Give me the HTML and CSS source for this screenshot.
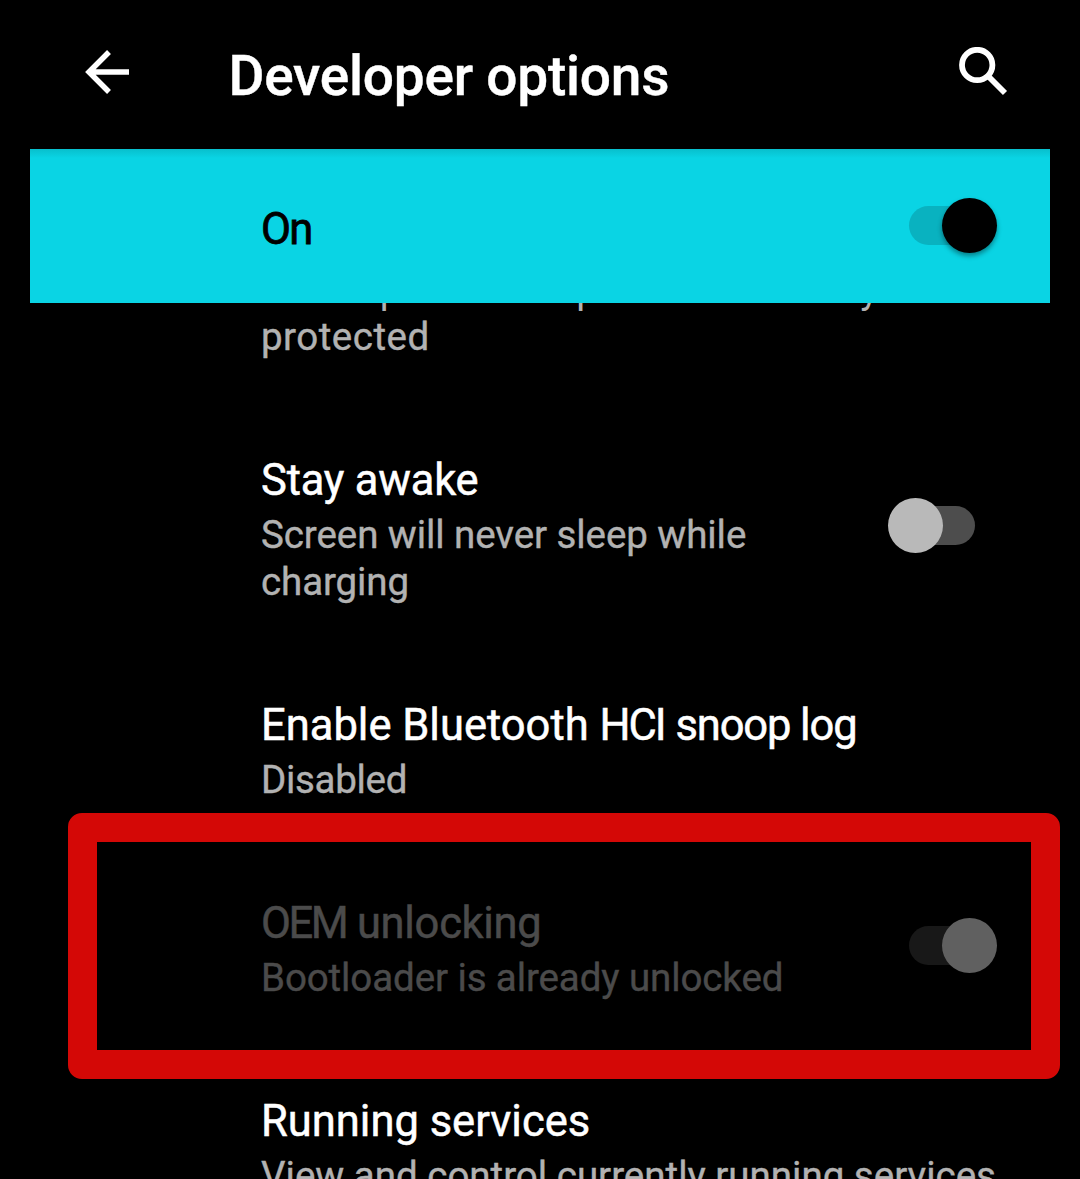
FILE: index.html
```html
<!DOCTYPE html>
<html lang="en">
<head>
<meta charset="utf-8">
<title>Developer options</title>
<link rel="stylesheet" href="styles.css">
</head>
<body>
<div class="screen">
  <header class="app-bar">
    <svg class="back" viewBox="0 0 46 46" fill="none" stroke="#fff" stroke-width="5.5"><path d="M45 23H6M25 3L5 23l20 20"/></svg>
    <h1 class="app-title"><span class="t-title">Developer options</span></h1>
    <svg class="search" viewBox="0 0 50 50" fill="none" stroke="#fff" stroke-width="5.800"><circle cx="18.200" cy="18" r="15.200"/><path d="M28.500 28.500L46 46"/></svg>
  </header>
  <div class="master">
    <span class="master-label t-on">On</span>
    <span class="switch on accent"><i class="track"></i><i class="thumb"></i></span>
  </div>
  <main class="list">
    <section class="row first">
      <div class="text">
        <p class="summary"><span class="t-backup">Desktop full backups aren’t currently</span><br><span class="t-protected">protected</span></p>
      </div>
    </section>
    <section class="row">
      <div class="text">
        <h2 class="name"><span class="t-stay">Stay awake</span></h2>
        <p class="summary"><span class="t-screen">Screen will never sleep while</span><br><span class="t-charging">charging</span></p>
      </div>
      <span class="switch off"><i class="track"></i><i class="thumb"></i></span>
    </section>
    <section class="row">
      <div class="text">
        <h2 class="name">Enable Bluetooth <span class="t-hci">HCI</span> <span class="t-snoop">snoop log</span></h2>
        <p class="summary"><span class="t-disabled">Disabled</span></p>
      </div>
    </section>
    <section class="row disabled">
      <div class="text">
        <h2 class="name"><span class="t-oem">OEM</span> <span class="t-unlocking">unlocking</span></h2>
        <p class="summary"><span class="t-boot">Bootloader is already unlocked</span></p>
      </div>
      <span class="switch on"><i class="track"></i><i class="thumb"></i></span>
      <div class="highlight"></div>
    </section>
    <section class="row">
      <div class="text">
        <h2 class="name"><span class="t-running">Running services</span></h2>
        <p class="summary"><span class="t-view">View and control currently running services</span></p>
      </div>
    </section>
  </main>
</div>
</body>
</html>
```
FILE: styles.css
```css
* { box-sizing: border-box; }
body { margin: 0; background: #000; color: #fff; font-family: Roboto, "Liberation Sans", sans-serif; }
h1, h2, p { margin: 0; font-weight: 400; white-space: nowrap; }
.screen { display: flex; flex-direction: column; height: 1179px; overflow: hidden; background: #000; }

.app-bar { flex: none; display: flex; height: 149px; padding: 0 71px 0 84px; }
.back { width: 46px; height: 46px; margin-top: 49px; }
.app-title { flex: 1; margin-left: 98.500px; margin-top: 44px; font-size: 55px; line-height: 64px; font-weight: 500; letter-spacing: -.23px; -webkit-text-stroke: .4px; }
.search { width: 50px; height: 50px; margin-top: 47px; }

.master { flex: none; position: relative; z-index: 1; display: flex; align-items: center; justify-content: space-between; height: 154px; margin: 0 30px; padding: 0 53px 0 231px; background: linear-gradient(#08bfcc, #0ad4e4 9px); color: #000; }
.master-label { font-size: 43.500px; line-height: 52px; font-weight: 400; padding-top: 8px; letter-spacing: -1.8px; -webkit-text-stroke: .8px; }

.list { flex: none; margin-top: -37px; }
.row { position: relative; display: flex; align-items: flex-start; justify-content: space-between; padding: 48px 83px 46px 261px; }
.row.first { padding-top: 0; }
.name { font-size: 43.500px; line-height: 53px; -webkit-text-stroke: .5px; }
.summary { font-size: 38.500px; line-height: 47px; color: #b2b2b2; -webkit-text-stroke: .4px; }
.name + .summary { margin-top: 4px; }
.disabled .name, .disabled .summary { color: #4b4b4b; }
.t-backup { letter-spacing: -.08px; -webkit-text-stroke: 0; }
.t-protected { letter-spacing: .5px; }
.t-stay { letter-spacing: -.2px; }
.t-screen { letter-spacing: -.07px; }
.t-charging { letter-spacing: -.1px; }
.t-hci { letter-spacing: -2px; }
.t-snoop { letter-spacing: -1.1px; }
.t-disabled { letter-spacing: -.3px; }
.t-oem { letter-spacing: -2.500px; }
.t-unlocking { letter-spacing: -.3px; }
.t-boot { letter-spacing: -.1px; }

.switch { flex: none; display: flex; align-items: center; width: 88px; height: 55px; }
.track { flex: none; width: 66px; height: 39px; border-radius: 20px; background: #4d4d4d; }
.thumb { flex: none; width: 55px; height: 55px; border-radius: 50%; background: #b9b9b9; z-index: 1; }
.on .thumb { margin-left: -33.500px; }
.row .on .track { background: #181818; }
.row .on .thumb { background: #606060; }
.off { flex-direction: row-reverse; margin-right: 22px; }
.off .thumb { margin-right: -33.500px; }
.accent { margin-top: -1px; }
.accent .track { background: #09b2c0; }
.accent .thumb { background: #000; box-shadow: 0 3px 5px rgba(0, 0, 0, .4); }
.row .switch { margin-top: 20.500px; }
.row .off { margin-top: 43.500px; }

/* Callout frame laid over the locked setting */
.highlight { position: absolute; top: -36px; left: 68px; width: 992px; height: 266px; border-radius: 14px; border: 29px solid #d40806; }
```
